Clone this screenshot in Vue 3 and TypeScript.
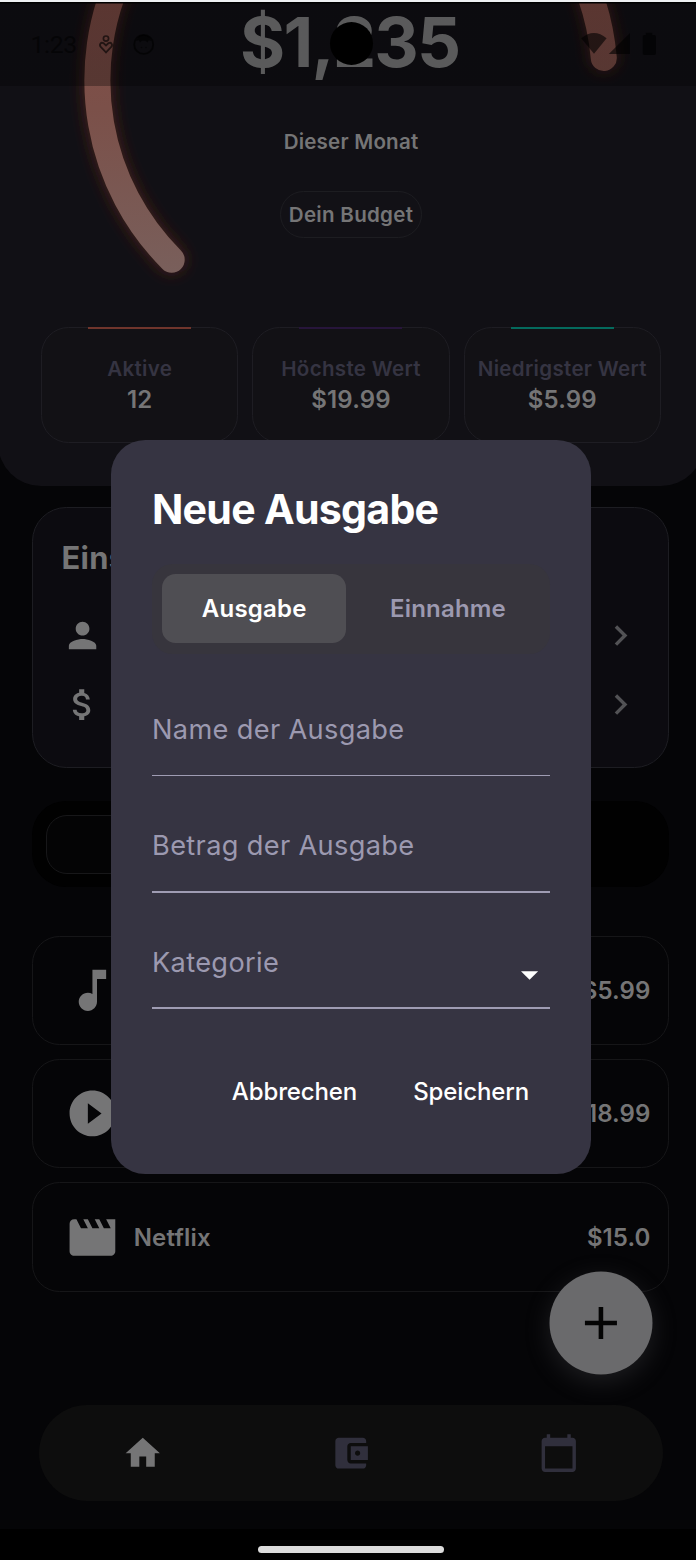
<script setup lang="ts">
interface Stat { label: string; value: string; tone: string }
interface Expense { name: string; price: string; icon: string }

const stats: Stat[] = [
  { label: 'Aktive', value: '12', tone: 'coral' },
  { label: 'Höchste Wert', value: '$19.99', tone: 'violet' },
  { label: 'Niedrigster Wert', value: '$5.99', tone: 'teal' },
]

const settings: string[] = [
  'M12 12c2.21 0 4-1.79 4-4s-1.79-4-4-4-4 1.79-4 4 1.79 4 4 4zm0 2c-2.67 0-8 1.34-8 4v2h16v-2c0-2.66-5.33-4-8-4z',
  'M11.8 10.9c-2.27-.59-3-1.2-3-2.15 0-1.09 1.01-1.85 2.7-1.85 1.78 0 2.44.85 2.5 2.1h2.21c-.07-1.72-1.12-3.3-3.21-3.81V3h-3v2.16c-1.94.42-3.5 1.68-3.5 3.61 0 2.31 1.91 3.46 4.7 4.13 2.5.6 3 1.48 3 2.41 0 .69-.49 1.79-2.7 1.79-2.06 0-2.87-.92-2.98-2.1h-2.2c.12 2.19 1.76 3.42 3.68 3.83V21h3v-2.15c1.95-.37 3.5-1.5 3.5-3.55 0-2.84-2.43-3.81-4.7-4.4z',
]

const expenses: Expense[] = [
  { name: '', price: '$5.99', icon: 'M12 3v10.55c-.59-.34-1.27-.55-2-.55-2.21 0-4 1.79-4 4s1.79 4 4 4 4-1.79 4-4V7h4V3h-6z' },
  { name: '', price: '$18.99', icon: 'M12 2C6.48 2 2 6.48 2 12s4.48 10 10 10 10-4.48 10-10S17.52 2 12 2zm-2 14.5v-9l6 4.5-6 4.5z' },
  { name: 'Netflix', price: '$15.0', icon: 'M18 4l2 4h-3l-2-4h-2l2 4h-3l-2-4H8l2 4H7L5 4H4c-1.1 0-1.99.9-1.99 2L2 18c0 1.1.9 2 2 2h16c1.1 0 2-.9 2-2V4h-4z' },
]

const fields: string[] = ['Name der Ausgabe', 'Betrag der Ausgabe', 'Kategorie']
</script>

<template>
  <div class="screen">
    <div class="page">
      <header class="hero">
        <svg class="ring" width="706" height="300" viewBox="-2 0 706 300">
          <defs>
            <linearGradient id="ringTone" gradientUnits="userSpaceOnUse" x1="0" y1="0" x2="0" y2="272">
              <stop offset="0" stop-color="#824d46" />
              <stop offset=".4" stop-color="#7b5049" />
              <stop offset="1" stop-color="#795f5b" />
            </linearGradient>
            <filter id="ringGlow" filterUnits="userSpaceOnUse" x="-2" y="-60" width="706" height="380">
              <feGaussianBlur stdDeviation="8" />
            </filter>
          </defs>
          <g fill="none" stroke-width="26" stroke-linecap="round">
            <path d="M171.700 259.700A253.500 253.500 0 0 1 121.700 -28M559.600 -64A253.500 253.500 0 0 1 603.800 58" stroke="#6b2a1f" stroke-opacity=".65" filter="url(#ringGlow)" />
            <path d="M171.700 259.700A253.500 253.500 0 0 1 121.700 -28M559.600 -64A253.500 253.500 0 0 1 603.800 58" stroke="url(#ringTone)" />
          </g>
        </svg>
        <div class="amount">$1,235</div>
        <div class="month">Dieser Monat</div>
        <div class="budget">Dein Budget</div>
        <div class="stats">
          <div v-for="s in stats" :key="s.label" class="stat">
            <i class="accent" :class="s.tone"></i>
            <span class="stat-label">{{ s.label }}</span>
            <span class="stat-value">{{ s.value }}</span>
          </div>
        </div>
      </header>

      <main class="content">
        <section class="settings">
          <h2>Einstellungen</h2>
          <div v-for="(d, i) in settings" :key="i" class="setting">
            <svg class="i24" viewBox="0 0 24 24"><path :d="d" /></svg>
            <svg class="i24 chev" viewBox="0 0 24 24"><path d="M10 6L8.59 7.41 13.17 12l-4.58 4.59L10 18l6-6z" /></svg>
          </div>
        </section>

        <div class="switcher"><div class="switch-on"></div></div>

        <div class="list">
          <div v-for="e in expenses" :key="e.price" class="expense">
            <svg class="i32" viewBox="0 0 24 24"><path :d="e.icon" /></svg>
            <span class="name">{{ e.name }}</span>
            <span class="price">{{ e.price }}</span>
          </div>
        </div>
      </main>

      <nav class="nav">
        <div><svg class="i24" viewBox="0 0 24 24"><path d="M10 20v-6h4v6h5v-8h3L12 3 2 12h3v8z" /></svg></div>
        <div class="off"><svg class="i24" viewBox="0 0 24 24"><path d="M21 18v1c0 1.1-.9 2-2 2H5c-1.11 0-2-.9-2-2V5c0-1.1.89-2 2-2h14c1.1 0 2 .9 2 2v1h-9c-1.11 0-2 .9-2 2v8c0 1.1.89 2 2 2h9zm-9-2h10V8H12v8zm4-2.5c-.83 0-1.5-.67-1.5-1.5s.67-1.5 1.5-1.5 1.5.67 1.5 1.5-.67 1.5-1.5 1.5z" /></svg></div>
        <div class="off"><svg class="i24" viewBox="0 0 24 24"><path d="M20 3h-1V1h-2v2H7V1H5v2H4c-1.1 0-2 .9-2 2v16c0 1.1.9 2 2 2h16c1.1 0 2-.9 2-2V5c0-1.1-.9-2-2-2zm0 18H4V8h16v13z" /></svg></div>
      </nav>
    </div>

    <button class="fab" aria-label="Neu"><svg class="i32" viewBox="0 0 24 24"><path d="M19 13h-6v6h-2v-6H5v-2h6V5h2v6h6v2z" /></svg></button>

    <div class="statusbar">
      <span class="clock">1:23</span>
      <svg class="st-left" width="60" height="24" viewBox="97 33 60 24">
        <g fill="none" stroke="#000" stroke-opacity=".62">
          <circle cx="106" cy="38.6" r="2.6" stroke-width="1.7" />
          <path d="M106 52.4L101 47.2C98.600 44.500 100.900 41.800 103.400 43.100L106 45.500L108.600 43.100C111.100 41.800 113.400 44.500 111 47.200Z" stroke-width="1.8" />
          <circle cx="143.700" cy="44.400" r="9.500" stroke-width="1.9" />
        </g>
        <path d="M136 41L138.500 36.500Q143.700 33 149 36.500L151.300 41L148.800 40.200L147.500 42.500L145.500 40.800H142L140 42.500L138.800 40.200Z" fill="#000" fill-opacity=".62" />
        <g fill="#000" fill-opacity=".5"><circle cx="141.500" cy="47.500" r=".8" /><circle cx="146" cy="47.500" r=".8" /></g>
      </svg>
      <span class="camera"></span>
      <svg class="st-right" width="80" height="24" viewBox="580 32 80 24" fill="#000" fill-opacity=".6">
        <path d="M581.200 38.300Q594 27.800 606.600 38.300L594 53.700Z" />
        <path d="M608.800 54H630V33Z" />
        <path d="M645.800 35V32.800H652.300V35H654.500Q656 35 656 36.500V53.200Q656 55 654.500 55H644.200Q642.700 55 642.700 53.200V36.500Q642.700 35 644.200 35Z" />
      </svg>
    </div>
    <div class="gesture"><i></i></div>

    <div class="dialog" role="dialog">
      <h1>Neue Ausgabe</h1>
      <div class="tabs">
        <div class="tab on"><span>Ausgabe</span></div>
        <div class="tab"><span>Einnahme</span></div>
      </div>
      <div v-for="(f, i) in fields" :key="f" class="field" :class="'f' + i">
        <span>{{ f }}</span>
        <svg v-if="i === 2" class="i24 drop" viewBox="0 0 24 24"><path d="M7 10l5 5 5-5z" /></svg>
      </div>
      <div class="actions"><span>Abbrechen</span><span>Speichern</span></div>
    </div>
  </div>
</template>

<style>
html, body { margin: 0; background: #050506; overflow: hidden; }
</style>

<style scoped>
.screen { position: relative; width: 696px; height: 1560px; overflow: hidden; background: #050507; font-family: Inter, "Noto Sans", sans-serif; color: #757576; }
.screen * { box-sizing: border-box; }
.page { width: 706px; margin-left: -2px; display: flex; flex-direction: column; }
.i24 { width: 41.14px; height: 41.14px; fill: currentColor; display: block; flex: none; }
.i32 { width: 54.86px; height: 54.86px; fill: currentColor; display: block; flex: none; }

.hero { position: relative; height: 486px; padding-top: 2px; background: #111015; border-radius: 0 0 43px 43px; display: flex; flex-direction: column; align-items: center; }
.ring { position: absolute; left: 0; top: 0; }
.amount { position: relative; line-height: 80px; margin-right: 2.500px; font-size: 69px; font-weight: 700; letter-spacing: -1.800px; color: #818182; }
.month { margin-top: 45px; line-height: 30px; font-size: 20.57px; font-weight: 600; letter-spacing: .2px; }
.budget { margin-top: 34px; height: 47px; width: 142px; line-height: 45px; text-align: center; border: 1.7px solid #1d1d21; border-radius: 24px; font-size: 20.57px; font-weight: 600; letter-spacing: .28px; background: #121116; white-space: nowrap; }
.stats { margin-top: 88.500px; width: 620px; display: grid; grid-template-columns: repeat(3, 1fr); gap: 14px; }
.stat { position: relative; height: 116.500px; border: 1.7px solid #1e1d23; border-radius: 27.500px; background: #121115; display: flex; flex-direction: column; align-items: center; padding-top: 26px; white-space: nowrap; }
.accent { position: absolute; top: -1px; left: 50%; width: 103px; margin-left: -51.500px; height: 2px; }
.coral { background: #70352c; }
.violet { background: #27153b; }
.teal { background: #046a5d; }
.stat-label { line-height: 30px; font-size: 20.57px; font-weight: 600; letter-spacing: .3px; color: #353442; }
.stat-value { line-height: 32px; font-size: 24px; font-weight: 600; letter-spacing: .15px; }

.content { width: 637px; margin: 20.500px 0 0 34px; }
.settings { height: 261.500px; border: 1.7px solid #1d1d22; border-radius: 34.300px; background: #0c0b10; padding: 30px 27.200px 0 28.500px; }
.settings h2 { margin: 0 0 37.500px; line-height: 39px; font-size: 30.860px; font-weight: 700; letter-spacing: .3px; padding-bottom: 1px; }
.setting { display: flex; justify-content: space-between; align-items: center; height: 41px; margin-bottom: 27.600px; }
.chev { color: #525255; }
.switcher { margin-top: 33px; height: 86px; border-radius: 34px; background: #010101; padding: 14px; }
.switch-on { width: 300px; height: 58.500px; border: 1.7px solid #171719; border-radius: 21px; background: #040405; }
.list { margin-top: 48.500px; display: flex; flex-direction: column; gap: 13.900px; }
.expense { height: 109.500px; border: 1.7px solid #161618; border-radius: 27.500px; display: flex; align-items: center; padding: 0 17.500px 0 32.300px; font-size: 24px; font-weight: 600; letter-spacing: .1px; }
.name { flex: 1; margin-left: 13.500px; letter-spacing: .2px; }
.nav { margin: 112.800px auto 0; width: 624px; height: 96px; border-radius: 48px; background: #0d0d0d; display: flex; align-items: center; }
.nav div { flex: 1; display: flex; justify-content: center; }
.nav svg { transform: translate(.2px, .6px); }
.off { color: #302f3c; }

.fab { position: absolute; left: 549px; top: 1271px; width: 103px; height: 103px; transform: translate(.5px, .5px); border: 0; padding: 0; border-radius: 50%; background: #6a6a6c; color: #040404; display: flex; align-items: center; justify-content: center; box-shadow: 0 7px 26px rgba(120, 120, 124, .22); }

.statusbar { position: absolute; left: 0; top: 0; width: 696px; height: 86px; border-top: 2px solid #eef0f2; background: linear-gradient(#000 0 1px, rgba(0, 0, 0, .3) 2px); }
.clock { position: absolute; left: 30.500px; top: 27px; line-height: 32px; font-family: Roboto, sans-serif; font-size: 24.800px; letter-spacing: -.35px; color: rgba(0, 0, 0, .55); }
.st-left { position: absolute; left: 97px; top: 31px; }
.st-right { position: absolute; left: 580px; top: 30px; }
.camera { position: absolute; left: 329.500px; top: 20px; width: 43px; height: 43px; border-radius: 50%; background: #000; }
.gesture { position: absolute; left: 0; top: 1529px; width: 696px; height: 31px; padding-top: 17px; background: #000; }
.gesture i { display: block; width: 186px; height: 7px; margin-left: 258px; border-radius: 4px; background: #dcdcdc; }

.dialog { position: absolute; left: 110.500px; top: 440px; width: 480.500px; height: 734px; border-radius: 34.300px; background: #363442; padding: 44px 41px 0; }
h1 { margin: 0; line-height: 51px; text-indent: .5px; font-size: 41.140px; font-weight: 700; color: #fff; white-space: nowrap; letter-spacing: -.75px; }
.tabs { margin-top: 28.500px; height: 90.500px; border-radius: 20.500px; background: #37353d; padding: 10.500px; display: flex; gap: 10px; }
.tab { flex: 1; height: 69px; line-height: 69px; border-radius: 13.700px; text-align: center; text-indent: .7px; font-size: 24px; font-weight: 600; letter-spacing: .2px; color: #9c99b0; }
.tab.on { background: #4f4e53; color: #fff; }
.field { display: flex; justify-content: space-between; align-items: center; height: 93px; margin-top: 23.500px; font-size: 27.200px; letter-spacing: .34px; color: #9c99b0; border-bottom: 2px solid #9f9cb3; white-space: nowrap; }
.field span { margin-left: .5px; }
.f0 { margin-top: 29px; height: 93px; border-bottom-width: 1px; }
.f2 span { padding-top: 1.500px; }
.drop { color: #fff; margin-top: 27px; }
.actions { display: flex; justify-content: flex-end; gap: 56px; margin-top: 63px; padding-right: 21px; line-height: 40px; font-size: 24px; font-weight: 500; letter-spacing: -.12px; color: #fff; }
</style>
